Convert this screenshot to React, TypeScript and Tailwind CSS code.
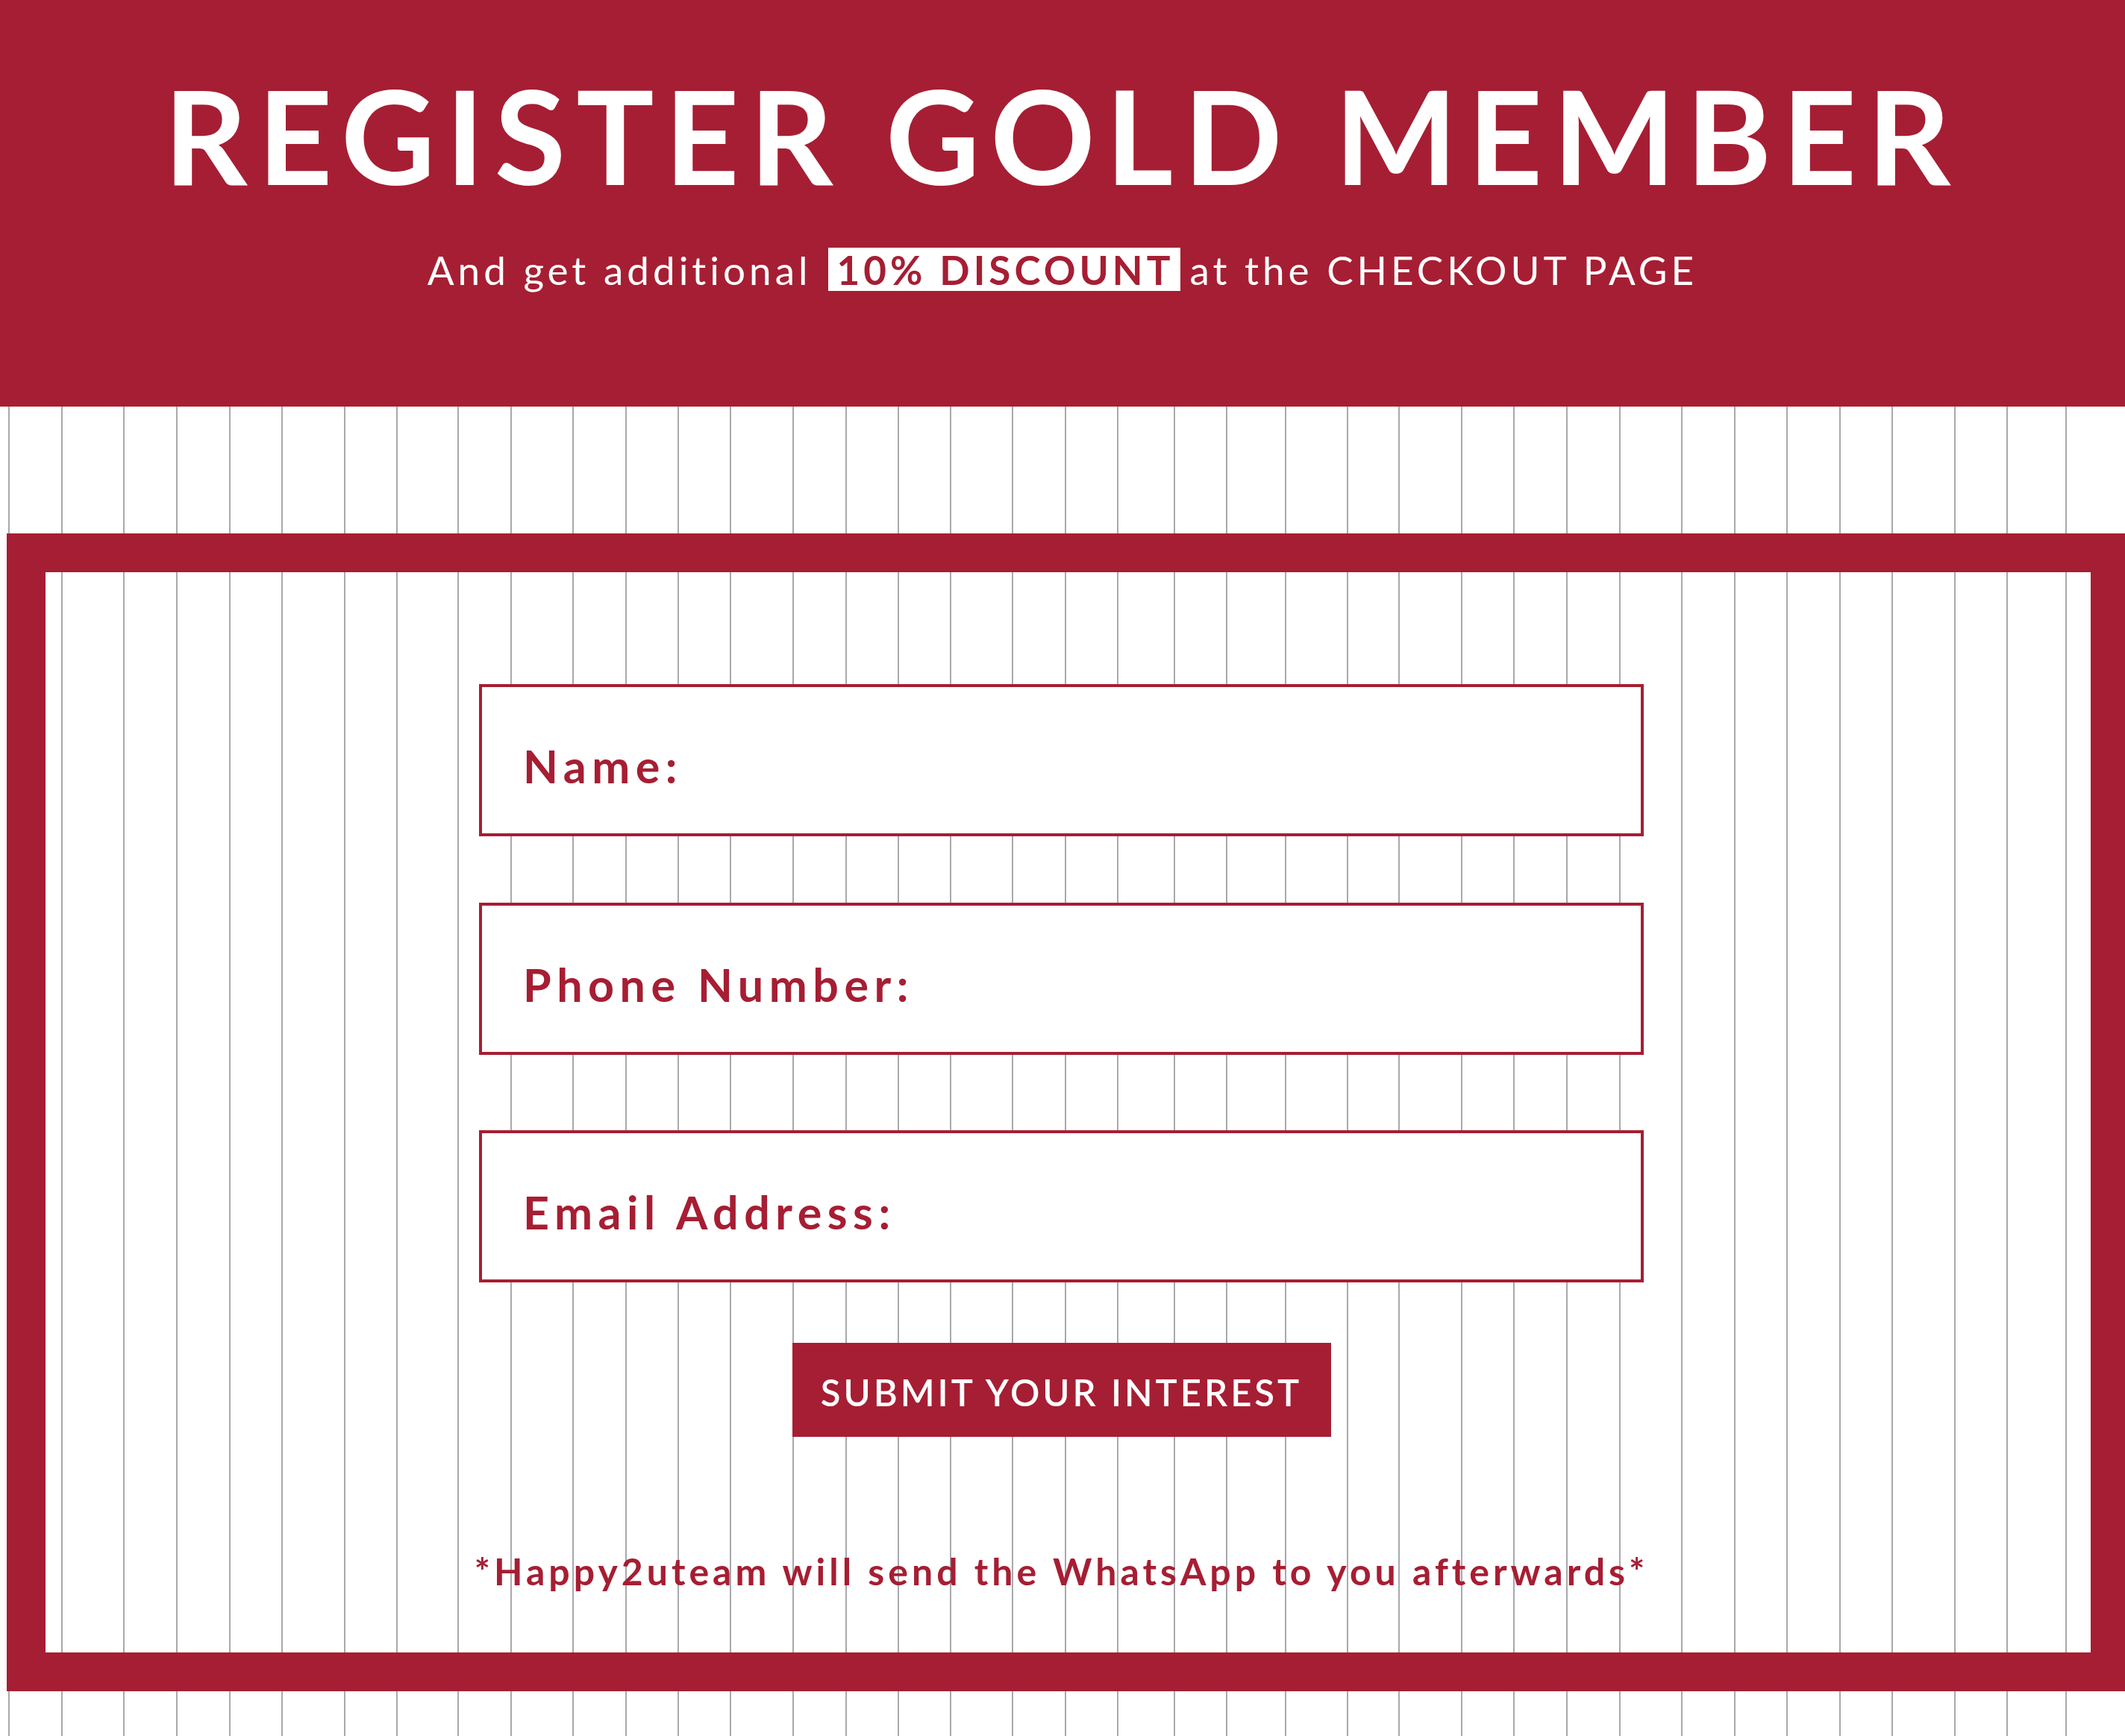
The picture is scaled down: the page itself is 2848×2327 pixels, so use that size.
import React from 'react';

// x positions of the pinstripes (measured from the design)
const stripes = [
  12, 83, 166, 237, 308, 378, 462, 532, 614, 685, 768, 839, 909, 979, 1063, 1134, 1204, 1274, 1357,
  1428, 1498, 1574, 1644, 1723, 1806, 1875, 1959, 2029, 2100, 2171, 2254, 2325, 2395, 2466, 2536,
  2620, 2690, 2769,
];

function Stripes() {
  return (
    <svg className="absolute inset-0" width="2848" height="1782" aria-hidden="true">
      {stripes.map((x) => (
        <line key={x} x1={x} y1={0} x2={x} y2={1782} stroke="#a8a9ad" strokeWidth={2} />
      ))}
    </svg>
  );
}

function Field({ label, className }: { label: string; className?: string }) {
  return (
    <div className={`h-[204px] w-full border-4 border-[#a61e33] bg-white pl-[55px] pt-[75px] ${className ?? ''}`}>
      <span className="block text-[61px] font-bold leading-none tracking-[7.5px] text-[#a61e33]">{label}</span>
    </div>
  );
}

export default function App() {
  return (
    <div className="h-[2327px] w-[2848px] overflow-hidden bg-white font-['Lato','Noto_Sans',sans-serif]">
      <header className="flex h-[545px] flex-col items-center bg-[#a61e33] text-white">
        <h1 className="mt-[94px] text-[174px] font-bold leading-none tracking-[14px]">REGISTER GOLD MEMBER</h1>
        <p className="mt-[64px] flex items-center text-[53px] leading-none tracking-[5px]">
          <span>And get additional</span>
          <span className="ml-[22px] mr-[12px] flex h-[58px] items-center bg-white pl-[12px] pr-[9px] font-bold text-[#a61e33]">
            10% DISCOUNT
          </span>
          <span>at the CHECKOUT PAGE</span>
        </p>
      </header>

      <section className="relative h-[1782px]">
        <Stripes />
        <div className="relative pl-[9px] pt-[170px]">
          <div className="h-[1552px] w-[2845px] border-[52px] border-[#a61e33]">
            <div className="ml-[581px] flex w-[1561px] flex-col items-center pt-[150px]">
              <Field label="Name:" />
              <Field label="Phone Number:" className="mt-[89px]" />
              <Field label="Email Address:" className="mt-[101px]" />
              <button className="mt-[81px] flex h-[126px] w-[722px] items-center justify-center bg-[#a61e33] pt-[6px] text-[49px] font-semibold leading-none tracking-[4px] text-white">
                SUBMIT YOUR INTEREST
              </button>
              <p className="mt-[155px] whitespace-nowrap text-[50px] font-bold leading-none tracking-[5px] text-[#a61e33]">
                *Happy2uteam will send the WhatsApp to you afterwards*
              </p>
            </div>
          </div>
        </div>
      </section>
    </div>
  );
}
